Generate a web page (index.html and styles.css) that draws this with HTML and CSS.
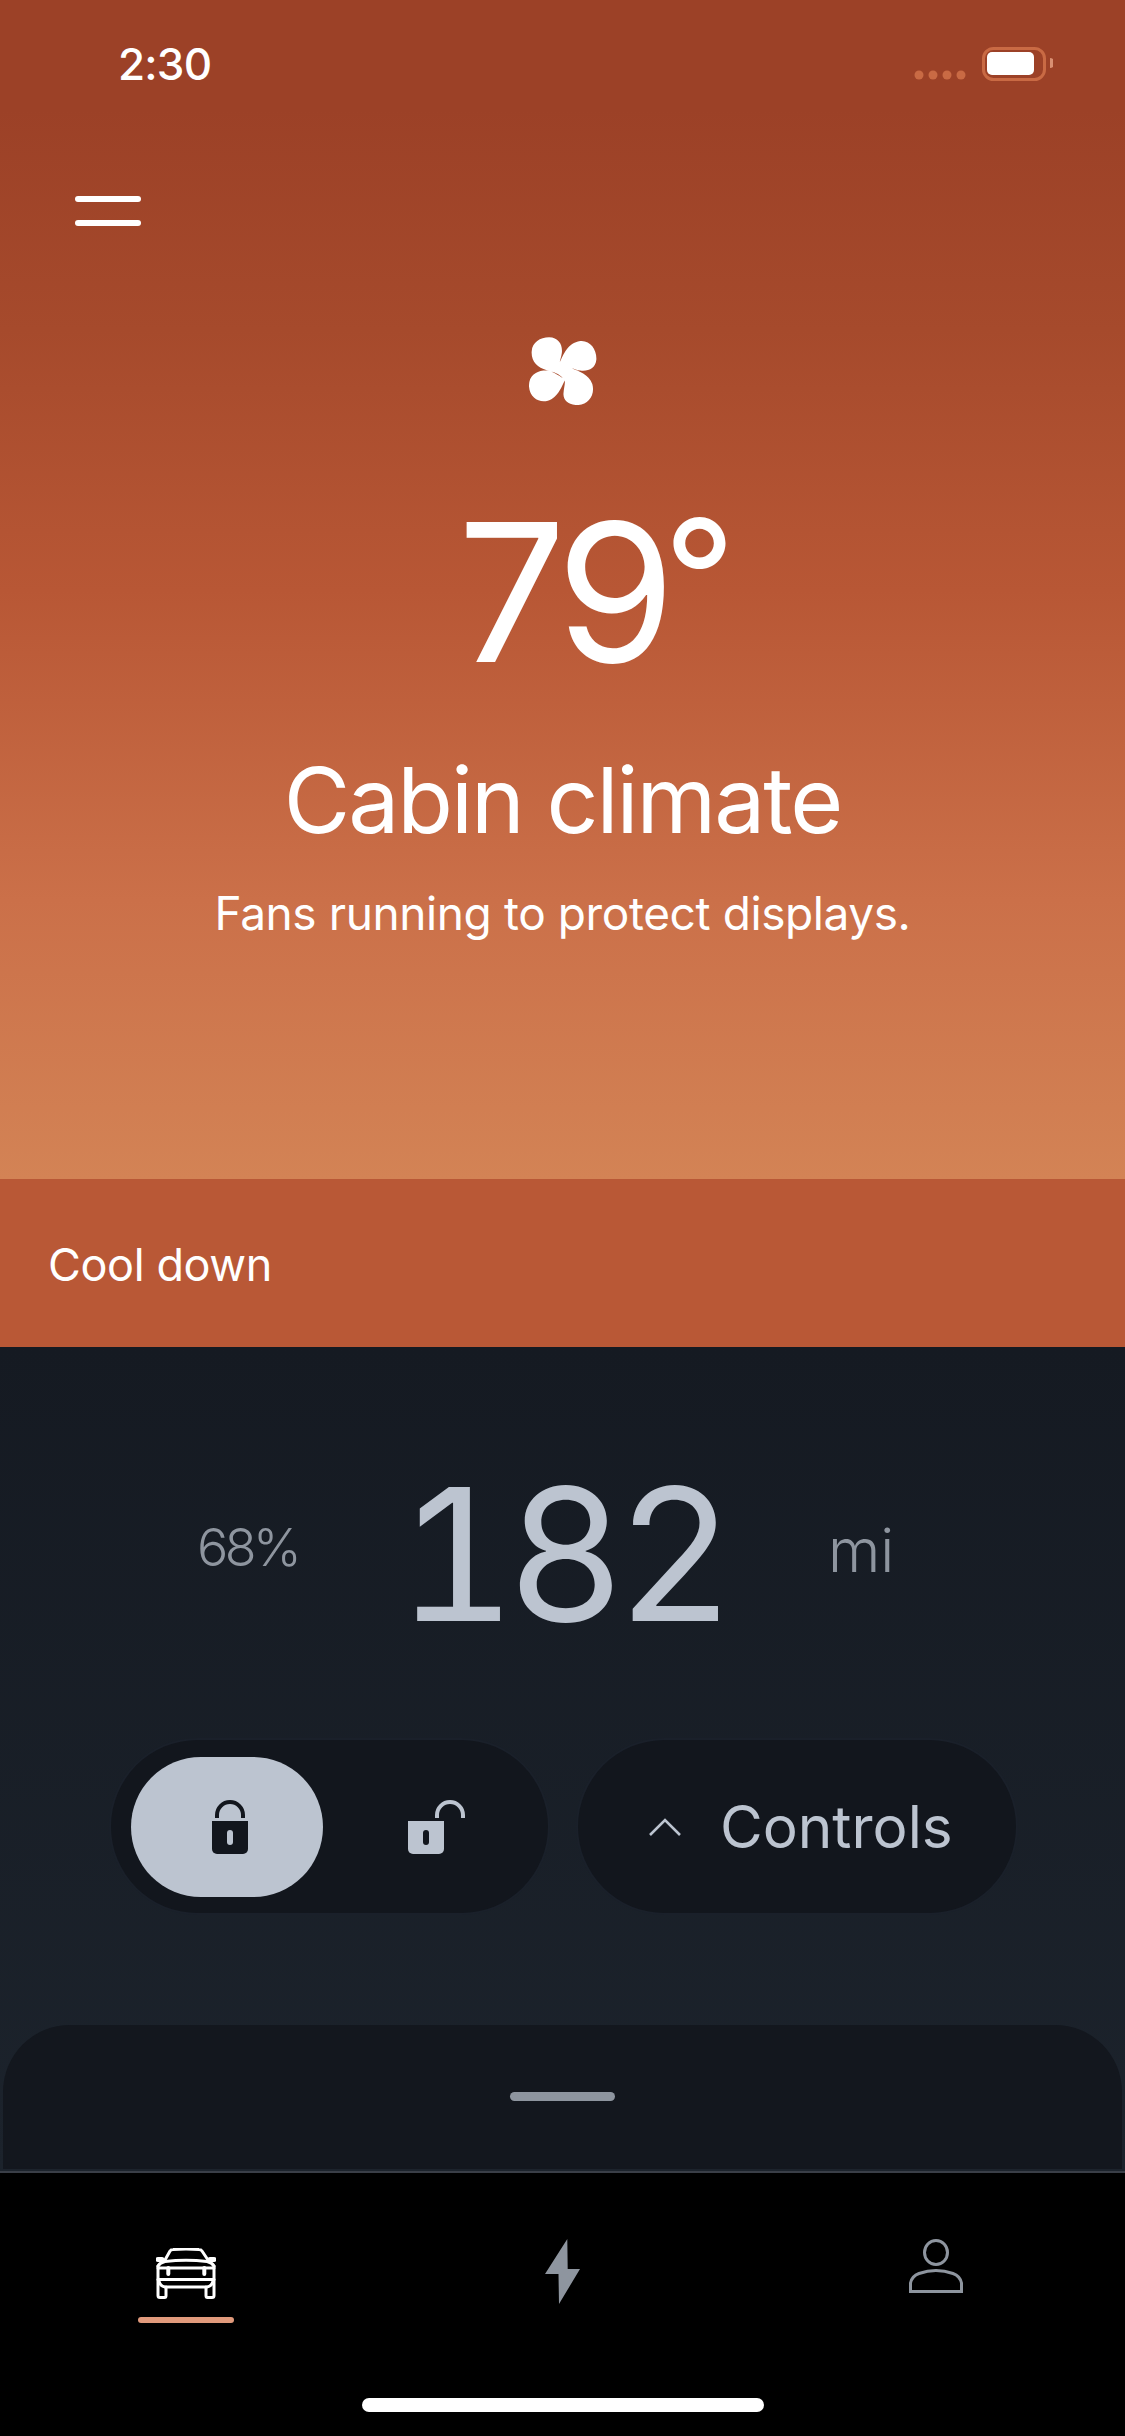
FILE: index.html
```html
<!DOCTYPE html>
<html lang="en">
<head>
<meta charset="utf-8">
<title>Cabin climate</title>
<link rel="stylesheet" href="styles.css">
</head>
<body>
<div class="app">
  <section class="hero">
    <div class="status">
      <span class="time">2:30</span>
      <svg class="status-icons" width="139" height="36" viewBox="0 0 139 36">
        <g fill="#c96a44"><circle cx="5" cy="28" r="4.5"/><circle cx="19" cy="28" r="4.5"/><circle cx="33" cy="28" r="4.5"/><circle cx="47" cy="28" r="4.5"/></g>
        <rect x="69.500" y="1.500" width="61" height="31" rx="10" fill="none" stroke="#c96a44" stroke-width="3"/>
        <rect x="73" y="5" width="47" height="23" rx="5" fill="#fff"/>
        <path d="M136 11a5 5 0 0 1 0 10z" fill="#d98f72"/>
      </svg>
    </div>
    <button class="menu" aria-label="Menu"><span></span><span></span></button>
    <svg class="fan" width="68" height="68" viewBox="147 82 203 203">
      <path fill="#fff" d="M248 205C236 190 222 187 200 181C172 174 153 155 155 125C157 98 180 83 207 83C236 84 248 106 245 130C243 143 240 150 239 157C250 135 262 100 300 94C330 91 350 120 348 150C346 175 325 185 300 182C290 181 282 177 275 175C295 184 325 192 336 222C345 255 325 282 295 285C265 287 248 270 250 250C251 235 255 222 254 212C244 230 238 252 215 267C190 283 150 272 147 230C146 200 165 185 190 182C205 181 218 184 248 205Z"/>
    </svg>
    <div class="temp">79<span class="deg">°</span></div>
    <h1 class="title">Cabin climate</h1>
    <p class="subtitle">Fans running to protect displays.</p>
  </section>
  <section class="strip">Cool down</section>
  <section class="vehicle">
    <div class="range">
      <span class="pct">68%</span>
      <span class="miles">182</span>
      <span class="unit">mi</span>
    </div>
    <div class="actions">
      <div class="pill locks">
        <button class="lock-btn lock-on" aria-label="Lock">
          <svg width="36" height="54" viewBox="0 0 36 54">
            <path d="M5 18V15A13 13 0 0 1 31 15V18" fill="none" stroke="#12161d" stroke-width="4"/>
            <path d="M0 21H36V49A5 5 0 0 1 31 54H5A5 5 0 0 1 0 49Z" fill="#12161d"/>
            <rect x="15" y="30" width="6" height="15" rx="3" fill="#bcc4d0"/>
          </svg>
        </button>
        <button class="lock-btn lock-off" aria-label="Unlock">
          <svg width="57" height="54" viewBox="0 0 57 54">
            <path d="M29 18V15A13 13 0 0 1 55 15V18" fill="none" stroke="#bcc4d0" stroke-width="4"/>
            <path d="M0 21H36V49A5 5 0 0 1 31 54H5A5 5 0 0 1 0 49Z" fill="#bcc4d0"/>
            <rect x="15" y="30" width="6" height="15" rx="3" fill="#12161d"/>
          </svg>
        </button>
      </div>
      <button class="pill controls">
        <svg width="32" height="18" viewBox="0 0 32 18"><path d="M1 17L16 2L31 17" fill="none" stroke="#bcc4d0" stroke-width="2.600"/></svg>
        <span>Controls</span>
      </button>
    </div>
    <div class="sheet"><span class="handle"></span></div>
  </section>
  <nav class="tabs">
    <div class="tab tab-active">
      <svg width="60" height="51" viewBox="0 0 60 51" fill="none" stroke="#fff" stroke-width="3" stroke-linecap="round" stroke-linejoin="round">
        <path d="M9 12L14 3Q15 1.500 17 1.500Q30 .5 43 1.500Q45 1.500 46 3L52 12"/>
        <path d="M2 18Q4 14.500 9 13.500Q30 11 51 13.500Q56 14.500 58 18"/>
        <path d="M2 18V47.500Q2 49.500 4 49.500H8.500Q10 49.500 10 47.500V39"/>
        <path d="M58 18V47.500Q58 49.500 56 49.500H51.500Q50 49.500 50 47.500V39"/>
        <path d="M2 20H58"/>
        <path d="M3 33Q4 38 9 39H51Q56 38 57 33"/>
        <path d="M2 31.500H58"/>
        <path d="M12.300 20V26M48.300 20V26" stroke-width="4"/>
        <path d="M2 11.500H6M54 11.500H58" stroke-width="5"/>
      </svg>
      <span class="tab-bar"></span>
    </div>
    <div class="tab">
      <svg width="35" height="65" viewBox="0 0 35 65"><path d="M22.300 0L0 35H13.500L14 65L35 30H22.700Z" fill="#8e959f"/></svg>
    </div>
    <div class="tab tab-person">
      <svg width="54" height="54" viewBox="0 0 54 54" fill="none" stroke="#8e959f" stroke-width="3">
        <ellipse cx="27" cy="13.500" rx="11.500" ry="12"/>
        <path d="M1.500 52.500V44Q3 37 10 34.500Q27 28.500 44 34.500Q51 37 52.500 44V52.500Z"/>
      </svg>
    </div>
    <span class="home"></span>
  </nav>
</div>
</body>
</html>
```

FILE: styles.css
```css
* { box-sizing: border-box; }
html, body { margin: 0; padding: 0; }
body { width: 1125px; height: 2436px; overflow: hidden; background: #000; font-family: Inter, "Liberation Sans", sans-serif; }
button { border: 0; padding: 0; background: none; font: inherit; color: inherit; }
.app { display: flex; flex-direction: column; width: 1125px; height: 2436px; }

.hero {
  display: flex; flex-direction: column; align-items: center;
  height: 1179px; color: #fff;
  background: linear-gradient(180deg, #9c4127 0, #9c4127 110px, #a64a2c 330px, #b85735 590px, #cb7049 900px, #d38355 1179px);
}
.status { display: flex; justify-content: space-between; align-items: flex-start; width: 100%; height: 196px; padding: 47px 72px 0 118px; }
.time { font-size: 44px; line-height: 34px; font-weight: 500; letter-spacing: -0.8px; }
.menu { display: flex; flex-direction: column; gap: 18px; align-self: flex-start; margin-left: 75px; }
.menu span { display: block; width: 66px; height: 6px; border-radius: 3px; background: #fff; }
.fan { display: block; margin-top: 111px; }
.temp { position: relative; margin-top: 97px; font-size: 192px; line-height: 180px; font-weight: 400; letter-spacing: -8px; }
.deg { position: absolute; left: 100%; top: -1px; margin-left: -4px; font-size: 158px; line-height: 150px; letter-spacing: 0; }
.title { margin: 63px 0 0; font-size: 91px; line-height: 110px; font-weight: 400; letter-spacing: -2px; }
.subtitle { margin: 30px 0 0; font-size: 46px; line-height: 56px; font-weight: 400; letter-spacing: -0.4px; }

.strip { height: 168px; padding: 58px 48px; background: #b95836; color: #fff; font-size: 45px; line-height: 56px; font-weight: 400; letter-spacing: -0.4px; }

.vehicle { display: flex; flex-direction: column; align-items: center; height: 824px; padding-top: 122px; background: linear-gradient(180deg, #151a22, #1c232c); }
.range { display: flex; align-items: center; align-self: flex-start; height: 170px; padding-left: 197px; color: #bcc4d0; }
.pct { font-size: 52px; font-weight: 300; letter-spacing: -3.5px; color: #8e959f; width: 200px; margin-top: -14px; }
.miles { font-size: 184px; line-height: 170px; font-weight: 400; width: 431px; font-feature-settings: "tnum"; letter-spacing: -10px; }
.unit { font-size: 60px; font-weight: 300; color: #8e959f; margin-top: -8px; }

.actions { display: flex; gap: 30px; margin-top: 101px; padding-left: 2px; }
.pill { display: flex; align-items: center; height: 173px; border-radius: 87px; background: #12161d; box-shadow: 0 0 0 2px #1a202a; }
.locks { width: 437px; padding: 0 20px; }
.lock-btn { display: flex; align-items: center; justify-content: center; width: 192px; height: 140px; border-radius: 70px; }
.lock-on { background: #bcc4d0; padding-left: 6px; }
.lock-off { margin-left: 2px; padding-left: 31px; }
.controls { width: 438px; padding-left: 71px; gap: 39px; color: #bcc4d0; font-size: 58.500px; font-weight: 400; letter-spacing: 0; }

.sheet { display: flex; justify-content: center; width: 1119px; height: 144px; margin-top: 112px; padding-top: 67px; border-radius: 67px 67px 0 0; background: #13171e; }
.handle { width: 105px; height: 9px; border-radius: 5px; background: #8e959f; }

.tabs { position: relative; display: grid; grid-template-columns: repeat(3, 375px); flex: 1; border-top: 2px solid #3a3f48; background: #000; }
.tab { display: flex; flex-direction: column; align-items: center; padding-top: 66px; }
.tab-active { padding-top: 75px; padding-right: 3px; }
.tab-person { padding-right: 3px; }
.tab-bar { width: 96px; height: 6px; margin-top: 18px; border-radius: 3px; background: #e19a7c; }
.home { position: absolute; left: 362px; bottom: 24px; width: 402px; height: 14px; border-radius: 7px; background: #fff; }
```
